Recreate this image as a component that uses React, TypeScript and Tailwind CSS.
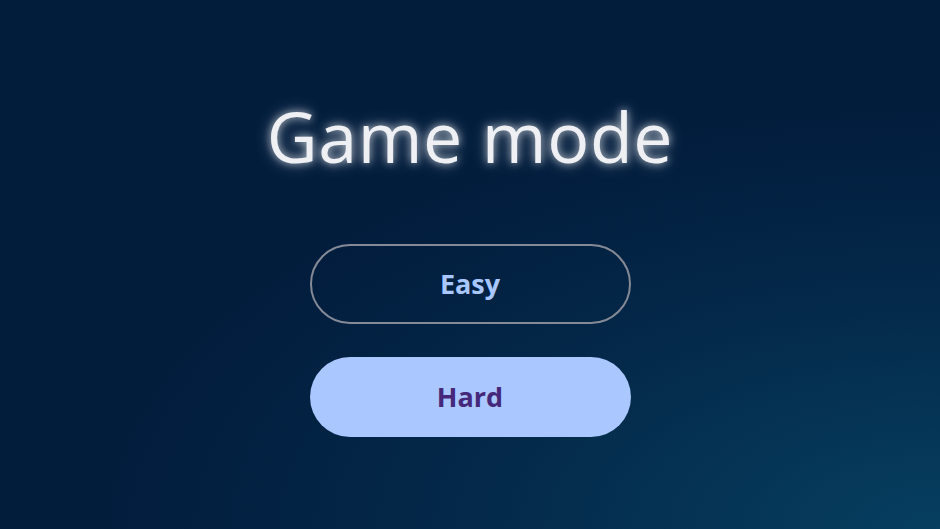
export default function App() {
  return (
    <main className="h-[529px] w-[940px] overflow-hidden bg-[radial-gradient(ellipse_90%_80%_at_100%_100%,#063f60_0%,#04294a_55%,#021c3c_100%)] font-['Open_Sans',sans-serif]">
      <div className="flex flex-col items-center pt-[91px]">
        <h1 className="text-[70px] leading-[90px] font-normal tracking-[0.6px] text-[#eef0f4] [text-shadow:0_0_8px_rgba(255,255,255,0.75),0_0_18px_rgba(255,255,255,0.35)]">
          Game mode
        </h1>
        <div className="mt-[63px] flex flex-col gap-[33px]">
          <button
            type="button"
            className="h-[80px] w-[321px] rounded-full border-2 border-[#858b96] text-[27px] font-bold text-[#a9c7ff]"
          >
            Easy
          </button>
          <button
            type="button"
            className="h-[80px] w-[321px] rounded-full bg-[#aac7ff] text-[27px] font-bold text-[#45287a]"
          >
            Hard
          </button>
        </div>
      </div>
    </main>
  );
}
